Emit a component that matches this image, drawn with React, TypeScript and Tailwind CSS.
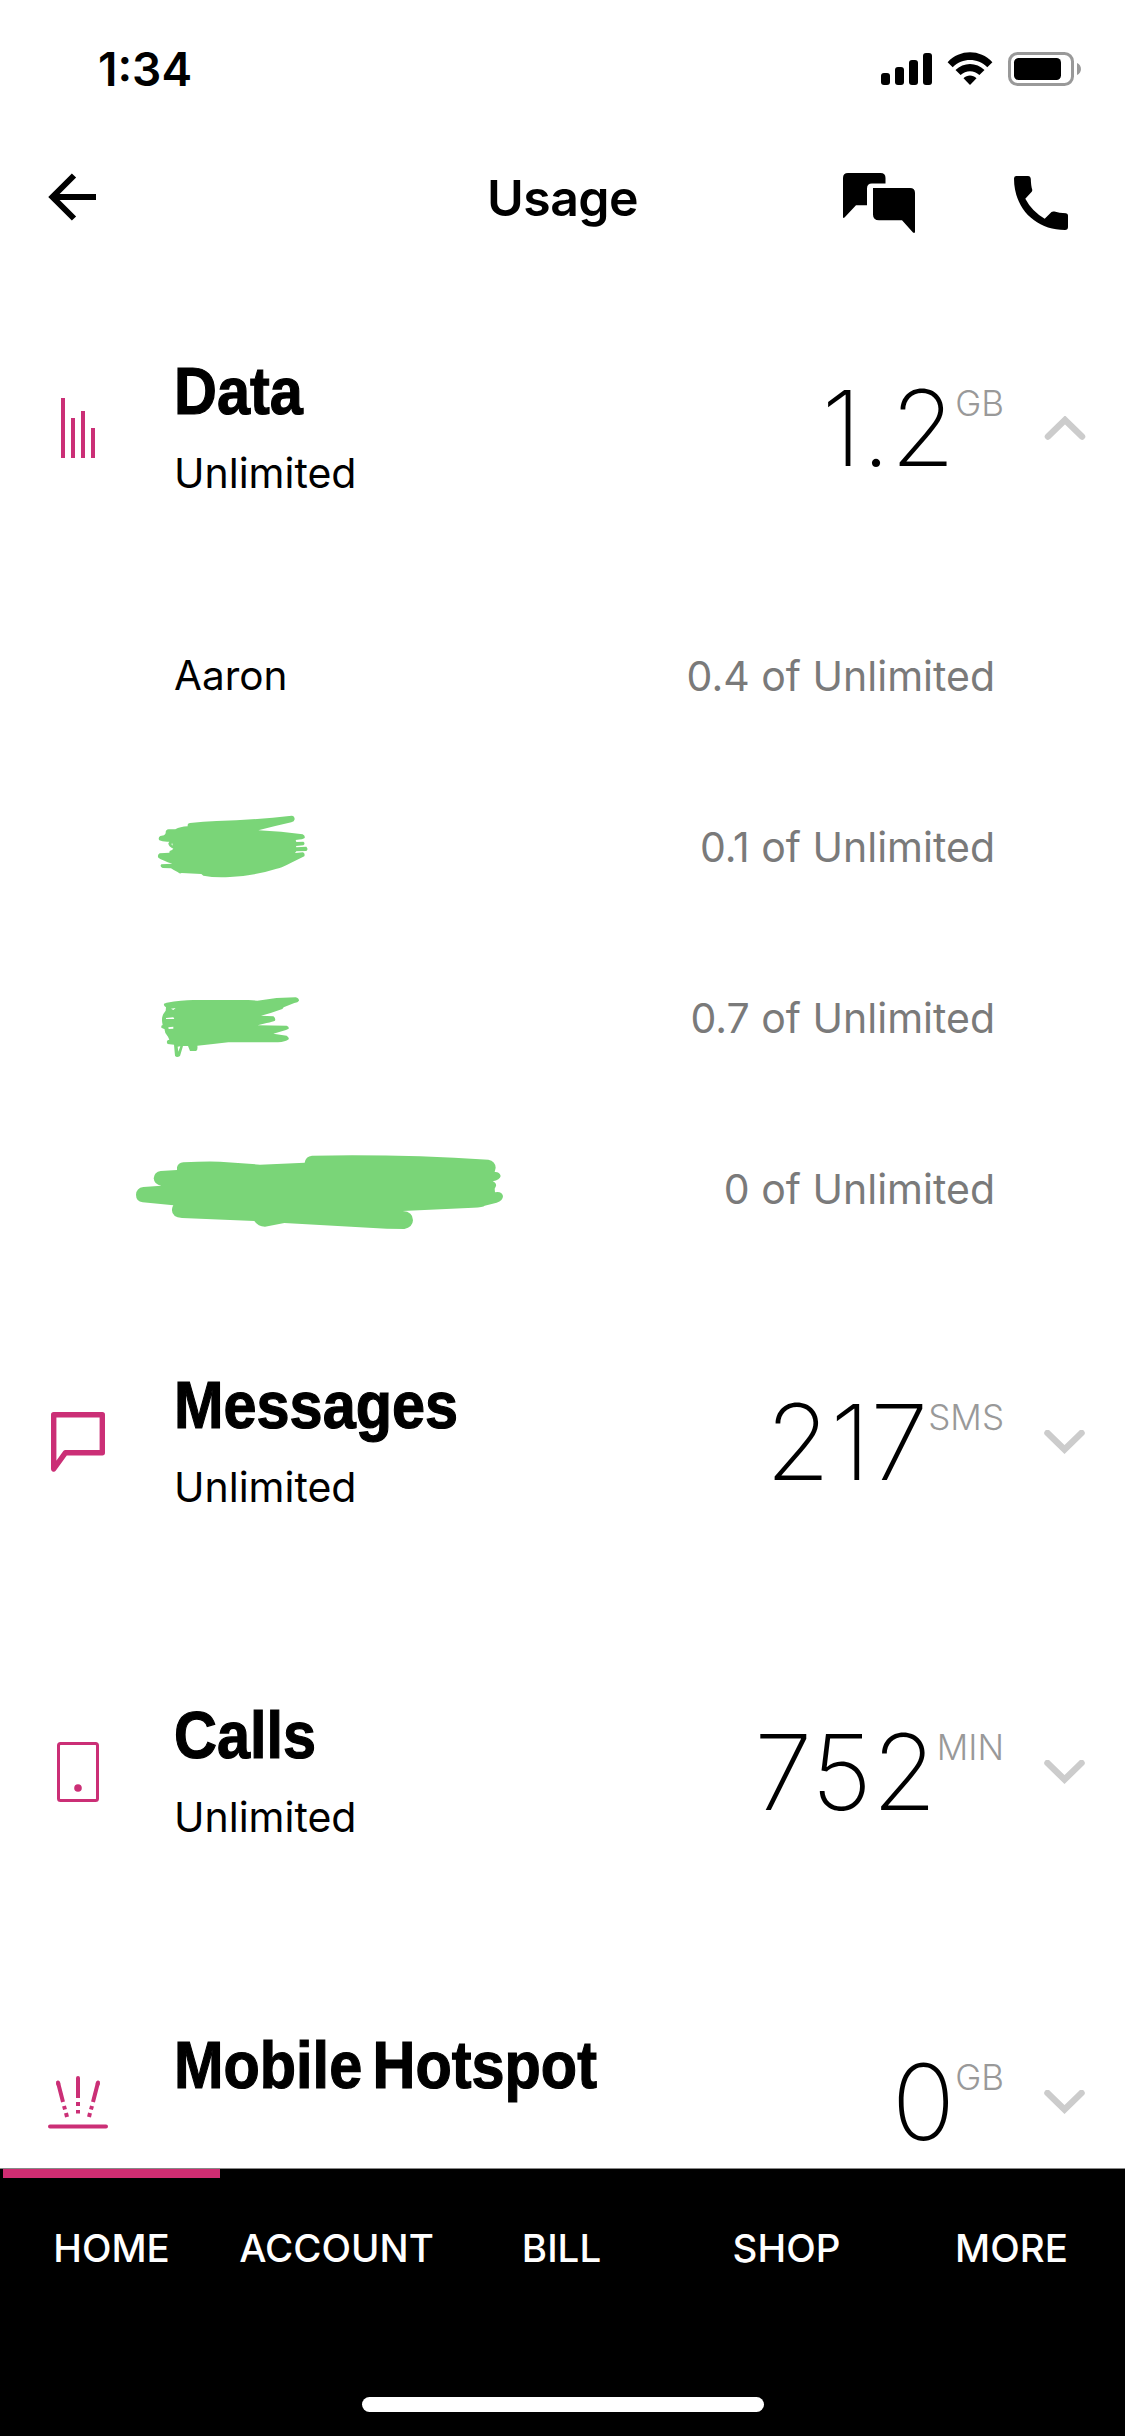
import { ReactNode, useState } from "react";

const PINK = "#cb2f76";

interface UsageSection {
    id: string;
    title: string;
    subtitle?: string;
    value: string;
    unit: string;
    icon: ReactNode;
}

function StatusBar() {
    return (
        <div className="h-[132px] flex items-start justify-between pl-[98px] pr-[44px]">
            <span className="mt-[42px] text-[46px] leading-[54px] font-semibold">1:34</span>
            <div className="mt-[52px] flex items-start">
                <svg width="51" height="34" viewBox="0 0 51 34">
                    <rect x="0" y="21" width="9" height="12" rx="3" />
                    <rect x="14" y="15" width="9" height="18" rx="3" />
                    <rect x="28" y="8" width="9" height="25" rx="3" />
                    <rect x="42" y="1" width="9" height="32" rx="3" />
                </svg>
                <svg width="46" height="34" viewBox="0 0 46 34" className="ml-[15px]">
                    <path d="M.6 10.2C13-3 33-3 45.4 10.2L40.3 15.2C30.7 5.6 15.3 5.6 5.7 15.2Z" />
                    <path d="M8.500 18.100C16.500 10 29.500 10 37.500 18.100L32.400 23.100C27.200 17.800 18.800 17.800 13.600 23.100Z" />
                    <path d="M16.500 26.300C20.200 22.600 25.800 22.600 29.500 26.300L23 33Z" />
                </svg>
                <svg width="73" height="34" viewBox="0 0 73 34" className="ml-[15px]">
                    <rect x="1.500" y="1.500" width="63" height="31" rx="8" fill="none" stroke="#999" strokeWidth="3" />
                    <rect x="6" y="6" width="47" height="22" rx="4.500" />
                    <path d="M69 11C74.300 13 74.300 21 69 23Z" fill="#999" />
                </svg>
            </div>
        </div>
    );
}

function Header() {
    return (
        <header className="h-[131px] grid grid-cols-[1fr_auto_1fr] items-center pl-[48px] pr-[57px]">
            <button aria-label="Back" className="justify-self-start mb-[2px]">
                <svg width="48" height="48" viewBox="0 0 48 48" fill="none" stroke="#000" strokeWidth="6">
                    <path d="M48 24H5M26 2.500L4.500 24L26 45.500" />
                </svg>
            </button>
            <h1 className="ml-[9px] text-[50px] leading-[60px] font-semibold tracking-[-0.6px]">Usage</h1>
            <div className="justify-self-end flex items-center mt-[11px]">
                <svg width="72" height="60" viewBox="843 173 72 60">
                    <path d="M848 173H880.500Q885.500 173 885.500 178V183.500H872Q867 183.500 867 188.500V205.300H856L844.500 217.500Q843 218.500 843 217V178Q843 173 848 173Z" />
                    <path d="M873 188H910Q915 188 915 193V232Q914.500 233.500 913 232.500L902 220.300H879Q873 220.300 873 214.500Z" />
                </svg>
                <svg width="54" height="54" viewBox="1014 176 54 54" className="ml-[99px]">
                    <path d="M1016 176H1028Q1030.500 176 1030.800 179Q1031 186 1032.200 189.500Q1032.500 191 1031.500 192L1025.300 198.800Q1032 211.500 1044.700 218.700L1051.500 212Q1052.700 211 1054.500 211.600Q1059 213.200 1066 213.300Q1068 213.500 1068 215.500V227Q1068 230 1065 230C1036 230 1014 209 1014 178.500Q1014 176 1016 176Z" />
                </svg>
            </div>
        </header>
    );
}

const sections: UsageSection[] = [
    {
        id: "data",
        title: "Data",
        subtitle: "Unlimited",
        value: "1.2",
        unit: "GB",
        icon: (
            <g fill={PINK}>
                <rect x="13" y="0" width="4" height="60" />
                <rect x="23" y="20" width="4" height="40" />
                <rect x="33" y="13" width="4" height="47" />
                <rect x="43" y="30" width="4" height="30" />
            </g>
        ),
    },
    {
        id: "messages",
        title: "Messages",
        subtitle: "Unlimited",
        value: "217",
        unit: "SMS",
        icon: (
            <path
                d="M5.700 2.700H54.300V40.700H17.500L5.700 57Z"
                fill="none"
                stroke={PINK}
                strokeWidth="5.400"
                strokeLinejoin="round"
            />
        ),
    },
    {
        id: "calls",
        title: "Calls",
        subtitle: "Unlimited",
        value: "752",
        unit: "MIN",
        icon: (
            <>
                <rect x="10.500" y="1.500" width="39" height="57" rx="2" fill="none" stroke={PINK} strokeWidth="3" />
                <circle cx="30" cy="46" r="3.800" fill={PINK} />
            </>
        ),
    },
    {
        id: "hotspot",
        title: "Mobile Hotspot",
        value: "0",
        unit: "GB",
        icon: (
            <g stroke={PINK} strokeWidth="4" fill="none">
                <path d="M2 54.500H58M30 6V8M10 10.500L10.300 12M50 10.500L49.700 12" strokeLinecap="round" />
                <path d="M30 6V26M30 30V34M30 38V41.500" />
                <path d="M10 10.500L15 30M16 34L17 37.500M18 41L19 45" />
                <path d="M50 10.500L45 30M44 34L43 37.500M42 41L41 45" />
            </g>
        ),
    },
];

// hand-drawn marker strokes covering the private names
const scribbles: Record<string, { viewBox: string; shape: ReactNode }> = {
    first: {
        viewBox: "0 -78 1200 513",
        shape: (
            <>
                <path d="M203 104Q204 99 210 99Q250 94 290 93Q400 90 515 77Q524 78 524 88Q523 95 514 97Q465 108 415 121Q485 124 548 133Q556 137 554 144Q551 148 527 150L529 156L550 155Q557 160 550 166L528 168L529 172L559 170Q566 177 559 183L529 184L525 189L549 187Q556 191 553 199L512 219Q480 236 470 236Q400 258 330 261Q285 264 250 257L244 252L185 249Q178 252 174 247Q163 242 153 235L128 234Q118 229 124 223L157 221Q127 211 115 203Q111 195 119 190L148 188L149 183L156 180L160 176Q145 170 145 160L148 155Q127 156 118 151Q113 143 121 138L132 136Q138 132 137 127Q137 119 146 118L166 118Q180 110 203 109Z" />
                <path d="M154 162L158 167L157 160Z" fill="#fff" />
            </>
        ),
    },
    second: {
        viewBox: "0 435 1200 513",
        shape: (
            <>
                <path d="M140 638Q185 631 220 630H385L412 632Q470 622 527 622Q537 625 537 632Q534 638 523 639L491 652L487 657Q455 669 423 677L460 679Q468 685 465 692Q459 695 440 699L413 706L500 707Q508 710 506 716L498 720L460 731L500 737Q508 742 506 748Q496 756 474 757H325Q280 763 232 767Q234 781 228 783H210L204 768H189L180 798Q170 805 165 797L162 764L143 762Q138 756 143 751L148 749L144 740Q133 730 134 718L124 713V707L128 705Q123 685 130 672L137 662L138 652Q130 647 132 641Z" />
                <path d="M138 684L160 682L163 687H138ZM145 712L160 710V716L146 717ZM153 656L167 654L160 660ZM173 770L181 769L175 785Z" fill="#fff" />
            </>
        ),
    },
    third: {
        viewBox: "0 -72 1200 513",
        shape: (
            <path d="M171 120V112Q174 98 190 97Q260 93 300 95L420 104L554 98Q557 79 576 77Q840 72 1105 89Q1126 93 1127 113L1124 126Q1139 125 1142 138Q1140 150 1118 154Q1130 159 1128 168L1124 176L1125 187Q1145 183 1149 198Q1149 212 1130 218L1094 227Q1090 232 1060 233L848 243Q879 245 879 271Q878 292 853 297L800 296L493 279L435 290Q414 290 403 273L186 264Q154 261 156 238Q156 232 160 226L68 217Q48 214 48 194Q49 174 70 171L124 167Q103 165 101 145Q103 125 122 123Z" />
        ),
    },
};

const lines = [
    { name: "Aaron", used: "0.4 of Unlimited" },
    { scribble: "first", used: "0.1 of Unlimited" },
    { scribble: "second", used: "0.7 of Unlimited" },
    { scribble: "third", used: "0 of Unlimited" },
];

function SectionRow({ section, open, onToggle }: { section: UsageSection; open: boolean; onToggle: () => void }) {
    return (
        <button onClick={onToggle} className="w-full h-[330px] shrink-0 flex items-center text-left pl-[48px] pr-[39px]">
            <svg width="60" height="60" viewBox="0 0 60 60" className="shrink-0">
                {section.icon}
            </svg>
            <div className="ml-[66px] h-[146px] flex flex-col gap-[22px]">
                <h2 className="font-['Liberation_Sans',sans-serif] text-[67px] leading-[72px] font-bold whitespace-nowrap [word-spacing:-7px] origin-left scale-x-[0.887] [-webkit-text-stroke:1.2px_black]">
                    {section.title}
                </h2>
                {section.subtitle && <p className="text-[41px] leading-[48px]">{section.subtitle}</p>}
            </div>
            <div className="ml-auto mb-[2px] flex items-start">
                <span className="text-[105px] leading-[105px] font-extralight">{section.value}</span>
                <span className="mt-[7px] text-[35px] leading-[42px] font-light text-[#999]">{section.unit}</span>
            </div>
            <svg
                width="42"
                height="24"
                viewBox="0 0 42 24"
                fill="none"
                stroke="#ccc"
                strokeWidth="6.500"
                strokeLinecap="round"
                className="ml-[40px] shrink-0"
            >
                {open ? <path d="M4 20.500L21 4L38 20.500" /> : <path d="M3.500 3L20.500 19.500L37.500 3" />}
            </svg>
        </button>
    );
}

export default function App() {
    const [openId, setOpenId] = useState("data");
    const [tab, setTab] = useState("HOME");

    return (
        <div className="w-[1125px] h-[2436px] flex flex-col overflow-hidden bg-white text-black font-['Inter',sans-serif]">
            <StatusBar />
            <Header />

            <main className="flex-1 min-h-0 overflow-hidden">
                {sections.map((s) => (
                    <section key={s.id}>
                        <SectionRow
                            section={s}
                            open={openId === s.id}
                            onToggle={() => setOpenId(openId === s.id ? "" : s.id)}
                        />
                        {openId === s.id &&
                            lines.map((line) => (
                                <div key={line.used} className="h-[171px] flex items-center justify-between pl-[120px] pr-[130px]">
                                    {line.scribble ? (
                                        <svg width="400" height="171" viewBox={scribbles[line.scribble].viewBox} fill="#7ad578">
                                            {scribbles[line.scribble].shape}
                                        </svg>
                                    ) : (
                                        <span className="pl-[54px] pb-[5px] text-[40.5px] leading-[48px]">{line.name}</span>
                                    )}
                                    <span className="pb-[5px] text-[41px] leading-[48px] text-[#7a7a7a]">{line.used}</span>
                                </div>
                            ))}
                    </section>
                ))}
            </main>

            <nav className="h-[268px] shrink-0 bg-black border-t border-[#888] flex flex-col items-center justify-between pb-[24px]">
                <div className="w-full grid grid-cols-5">
                    {["HOME", "ACCOUNT", "BILL", "SHOP", "MORE"].map((label) => (
                        <button key={label} onClick={() => setTab(label)} className="flex flex-col items-center">
                            <span className={tab === label ? "h-[9px] w-[217px] mr-[2px] bg-[#cf2d72]" : "h-[9px]"} />
                            <span className="mt-[47px] mr-[2px] text-[38.5px] leading-[46px] font-medium text-white">{label}</span>
                        </button>
                    ))}
                </div>
                <div className="w-[402px] h-[15px] rounded-full bg-white" />
            </nav>
        </div>
    );
}
